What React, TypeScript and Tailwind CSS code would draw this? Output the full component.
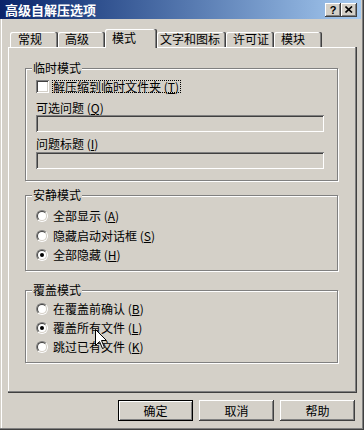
import React from "react";

function CapBtn({ children }: { children: React.ReactNode }) {
  return (
    <div className="w-[16px] h-[14px] bg-[#d4d0c8] flex items-center justify-center shadow-[inset_-1px_-1px_0_#404040,inset_1px_1px_0_#ffffff,inset_-2px_-2px_0_#808080]">
      {children}
    </div>
  );
}

function Tab({
  label,
  cls,
  sel,
}: {
  label: string;
  cls: string;
  sel?: boolean;
}) {
  if (sel) {
    return (
      <div
        className={
          "relative z-10 h-[19px] -mb-[1px] bg-[#d4d0c8] pt-[3px] rounded-t-[2px] shadow-[inset_-1px_0_0_#404040,inset_-2px_0_0_#808080,inset_1px_1px_0_#ffffff] " +
          cls
        }
      >
        <span className="leading-[12px]">{label}</span>
      </div>
    );
  }
  return (
    <div
      className={
        "h-[15px] pt-[1px] rounded-t-[2px] shadow-[inset_-1px_0_0_#404040,inset_-2px_0_0_#808080,inset_1px_1px_0_#ffffff] " +
        cls
      }
    >
      <span className="leading-[12px]">{label}</span>
    </div>
  );
}

function Mn({ pre, k }: { pre: string; k: string }) {
  return (
    <span className="whitespace-nowrap">
      {pre} (<span className="underline underline-offset-[1px]">{k}</span>)
    </span>
  );
}

function Radio({ checked }: { checked?: boolean }) {
  return (
    <div className="w-[12px] h-[12px] rounded-full border border-t-[#808080] border-l-[#808080] border-r-white border-b-white">
      <div className="w-[10px] h-[10px] rounded-full border border-t-[#404040] border-l-[#404040] border-r-[#d4d0c8] border-b-[#d4d0c8] bg-white flex items-center justify-center">
        {checked ? <div className="w-[4px] h-[4px] rounded-full bg-black" /> : null}
      </div>
    </div>
  );
}

function RadioRow({
  h,
  checked,
  children,
}: {
  h: string;
  checked?: boolean;
  children: React.ReactNode;
}) {
  return (
    <div className={"flex items-center " + h}>
      <Radio checked={checked} />
      <span className="ml-[5px] leading-[12px]">{children}</span>
    </div>
  );
}

function Legend({ text }: { text: string }) {
  return (
    <span className="absolute left-[6px] -top-[7px] px-[1px] bg-[#d4d0c8] leading-[12px]">
      {text}
    </span>
  );
}

export default function App() {
  return (
    <div className="relative w-[364px] h-[430px] bg-[#d4d0c8] overflow-hidden flex flex-col text-[12px] leading-[12px] text-black font-['Noto_Sans_CJK_SC','Noto_Sans',sans-serif] shadow-[inset_-1px_-1px_0_#404040,inset_-2px_-2px_0_#808080,inset_1px_0_0_#d4d0c8,inset_2px_0_0_#ffffff]">
      {/* Title bar */}
      <div className="h-[19px] w-[361px] bg-linear-to-r from-[#0a246a] to-[#a6caf0] flex items-center pl-[5px] pr-[4px]">
        <span className="text-white font-bold text-[13px] leading-[13px]">
          高级自解压选项
        </span>
        <div className="ml-auto flex">
          <CapBtn>
            <span className="font-['Liberation_Sans',sans-serif] font-bold text-[11px] leading-[11px] mt-[1px]">
              ?
            </span>
          </CapBtn>
          <CapBtn>
            <svg width="8" height="7" viewBox="0 0 8 7">
              <path d="M0.5 0.5 L7 6.5 M7 0.5 L0.5 6.5" stroke="#000" strokeWidth="1.6" />
            </svg>
          </CapBtn>
        </div>
      </div>

      {/* Tabs */}
      <div className="mt-[10px] h-[18px] pl-[10px] flex items-end">
        <Tab label="常规" cls="w-[48px] pl-[8px]" />
        <Tab label="高级" cls="w-[47px] pl-[7px]" />
        <Tab label="模式" cls="w-[52px] pl-[7px]" sel />
        <Tab label="文字和图标" cls="w-[69px] pl-[3px]" />
        <Tab label="许可证" cls="w-[48px] pl-[7px]" />
        <Tab label="模块" cls="w-[48px] pl-[7px]" />
      </div>

      {/* Panel */}
      <div className="ml-[8px] w-[349px] h-[346px] flex flex-col pl-[17px] pt-[21px] shadow-[inset_-1px_-1px_0_#404040,inset_-2px_-2px_0_#808080,inset_1px_1px_0_#ffffff]">
        {/* Group 1 */}
        <div className="relative w-[313px] h-[113px] border border-[#808080] shadow-[inset_1px_1px_0_#ffffff,1px_1px_0_#ffffff] flex flex-col pl-[10px] pt-[11px]">
          <Legend text="临时模式" />
          <div className="flex items-center h-[13px]">
            <div className="w-[13px] h-[13px] bg-white shadow-[inset_1px_1px_0_#808080,inset_-1px_-1px_0_#ffffff,inset_2px_2px_0_#404040,inset_-2px_-2px_0_#d4d0c8]" />
            <div className="ml-[3px] h-[13px] border border-dotted border-black flex items-center pr-[1px]">
              <span className="leading-[12px]">
                <Mn pre="解压缩到临时文件夹" k="T" />
              </span>
            </div>
          </div>
          <div className="mt-[9px] h-[12px]">
            <Mn pre="可选问题" k="Q" />
          </div>
          <div className="mt-[1px] w-[288px] h-[17px] bg-[#d4d0c8] shadow-[inset_1px_1px_0_#808080,inset_-1px_-1px_0_#ffffff,inset_2px_2px_0_#404040,inset_-2px_-2px_0_#d4d0c8]" />
          <div className="mt-[6px] h-[12px]">
            <Mn pre="问题标题" k="I" />
          </div>
          <div className="mt-[2px] w-[288px] h-[17px] bg-[#d4d0c8] shadow-[inset_1px_1px_0_#808080,inset_-1px_-1px_0_#ffffff,inset_2px_2px_0_#404040,inset_-2px_-2px_0_#d4d0c8]" />
        </div>

        {/* Group 2 */}
        <div className="relative mt-[14px] w-[313px] h-[76px] border border-[#808080] shadow-[inset_1px_1px_0_#ffffff,1px_1px_0_#ffffff] flex flex-col pl-[10px] pt-[10px]">
          <Legend text="安静模式" />
          <RadioRow h="h-[20px]">
            <Mn pre="全部显示" k="A" />
          </RadioRow>
          <RadioRow h="h-[19px]">
            <Mn pre="隐藏启动对话框" k="S" />
          </RadioRow>
          <RadioRow h="h-[20px]" checked>
            <Mn pre="全部隐藏" k="H" />
          </RadioRow>
        </div>

        {/* Group 3 */}
        <div className="relative mt-[19px] w-[313px] h-[73px] border border-[#808080] shadow-[inset_1px_1px_0_#ffffff,1px_1px_0_#ffffff] flex flex-col pl-[10px] pt-[8px]">
          <Legend text="覆盖模式" />
          <RadioRow h="h-[19px]">
            <Mn pre="在覆盖前确认" k="B" />
          </RadioRow>
          <RadioRow h="h-[19px]" checked>
            <Mn pre="覆盖所有文件" k="L" />
          </RadioRow>
          <RadioRow h="h-[19px]">
            <Mn pre="跳过已有文件" k="K" />
          </RadioRow>
        </div>
      </div>

      {/* Buttons */}
      <div className="mt-[7px] flex justify-end pr-[9px] gap-[6px]">
        <div className="w-[75px] h-[21px] border border-black flex items-center justify-center shadow-[inset_1px_1px_0_#ffffff,inset_-1px_-1px_0_#808080]">
          确定
        </div>
        <div className="w-[75px] h-[21px] flex items-center justify-center shadow-[inset_-1px_-1px_0_#404040,inset_1px_1px_0_#ffffff,inset_-2px_-2px_0_#808080]">
          取消
        </div>
        <div className="w-[75px] h-[21px] flex items-center justify-center shadow-[inset_-1px_-1px_0_#404040,inset_1px_1px_0_#ffffff,inset_-2px_-2px_0_#808080]">
          帮助
        </div>
      </div>

      {/* Mouse cursor */}
      <svg
        className="absolute left-[95px] top-[329px] z-20"
        width="13"
        height="21"
        viewBox="0 0 13 21"
      >
        <path
          d="M0.5 0.5 L0.5 16.5 L4.5 12.5 L7.5 19.5 L9.5 18.5 L6.5 11.5 L11.5 11.5 Z"
          fill="#ffffff"
          stroke="#000000"
          strokeWidth="1"
        />
      </svg>
    </div>
  );
}
